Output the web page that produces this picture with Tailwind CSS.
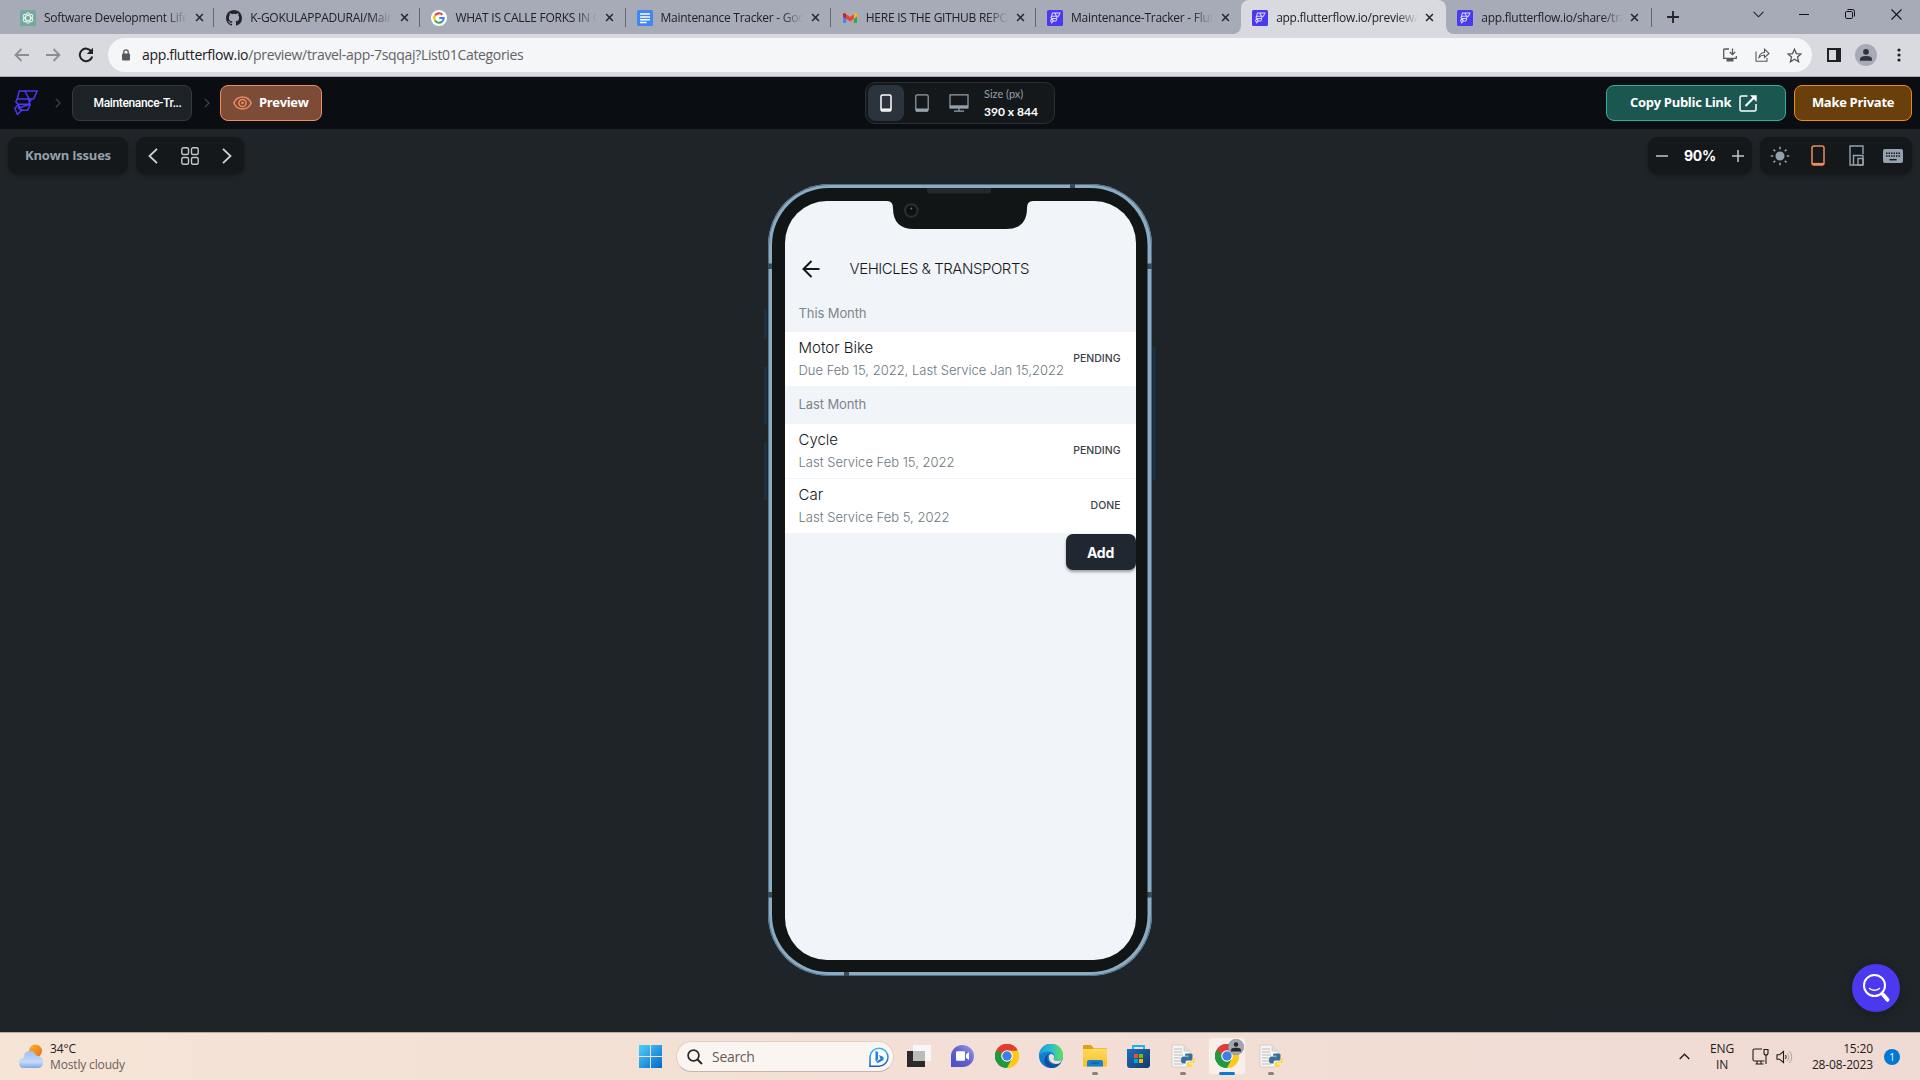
<!DOCTYPE html>
<html lang="en">
<head>
<meta charset="utf-8">
<title>app.flutterflow.io/preview</title>
<script src="https://cdn.jsdelivr.net/npm/@tailwindcss/browser@4"></script>
</head>
<body class="w-[1920px] h-[1080px] overflow-hidden flex flex-col bg-[#1f2428] font-['Open_Sans',sans-serif] text-[#202124]">

<svg class="absolute w-0 h-0" aria-hidden="true">
  <defs>
    <linearGradient id="edgeA" x1="0" y1="0" x2="1" y2="0"><stop offset="0" stop-color="#1b9de2"/><stop offset=".55" stop-color="#2cc0c9"/><stop offset="1" stop-color="#66e04c"/></linearGradient>
    <linearGradient id="edgeB" x1="0" y1="0" x2="0" y2="1"><stop offset="0" stop-color="#1b86d6"/><stop offset="1" stop-color="#1173c8"/></linearGradient>
    <linearGradient id="win" x1="0" y1="0" x2="1" y2="1"><stop offset="0" stop-color="#4fd0fb"/><stop offset="1" stop-color="#0369cd"/></linearGradient>
    <linearGradient id="bing" x1="0" y1="0" x2="0" y2="1"><stop offset="0" stop-color="#22c3e8"/><stop offset="1" stop-color="#1b55d6"/></linearGradient>
    <linearGradient id="chat" x1="0" y1="1" x2="1" y2="0"><stop offset="0" stop-color="#4a4fc4"/><stop offset=".5" stop-color="#6260cc"/><stop offset="1" stop-color="#9aa4ee"/></linearGradient>
    <linearGradient id="folder" x1="0" y1="0" x2="0" y2="1"><stop offset="0" stop-color="#ffd95e"/><stop offset="1" stop-color="#fbbf22"/></linearGradient>
    <linearGradient id="store" x1="0" y1="0" x2="1" y2="1"><stop offset="0" stop-color="#1c6fc0"/><stop offset="1" stop-color="#163a66"/></linearGradient>
    <linearGradient id="cloud" x1="0" y1="0" x2="0" y2="1"><stop offset="0" stop-color="#9cc0f6"/><stop offset=".65" stop-color="#c6dbf9"/><stop offset="1" stop-color="#7fa4e6"/></linearGradient>
    <linearGradient id="sun" x1="0" y1="0" x2="1" y2="1"><stop offset="0" stop-color="#f8b62a"/><stop offset="1" stop-color="#f06a10"/></linearGradient>
    <symbol id="close" viewBox="0 0 10 10"><path d="M1.2 1.2l7.6 7.6M8.8 1.2L1.2 8.8" stroke="#24262b" stroke-width="1.7" fill="none"/></symbol>
    <symbol id="ff" viewBox="0 0 24 26"><path d="M5.200 1H23.200L19.600 8.900H3.200ZM10.800 1L15.200 8.900M3.200 8.900L1.800 12L4.300 14.200H14.600L17.300 8.900M4.300 14.200L6 19.500L8 20.300H13.400L16 15.200L14.600 8.900M16 14.200H4.300L0.900 18.500L3.400 24.500L8 20L4.300 18Z" fill="none" stroke="currentColor" stroke-width="1.500" stroke-linejoin="round"/></symbol>
    <symbol id="fftab" viewBox="0 0 16 16"><rect width="16" height="16" rx="1.500" fill="#4b39ef"/><g transform="translate(3.200 2.500) scale(.42)" color="#d9d4ff"><path d="M5.200 1H23.200L19.600 8.900H3.200ZM10.800 1L15.200 8.900M3.200 8.900L1.800 12L4.300 14.200H14.600L17.300 8.900M4.300 14.200L6 19.500L8 20.300H13.400L16 15.200M4.300 14.200L0.900 18.500L3.400 24.500L8 20Z" fill="none" stroke="#dcd8ff" stroke-width="2.400"/></g></symbol>
    <symbol id="chrome" viewBox="0 0 24 24"><path d="M12 12L1.600 6A12 12 0 0 1 22.400 6Z" fill="#e33b2e"/><path d="M12 12L22.400 6A12 12 0 0 1 12 24Z" fill="#fdc81a"/><path d="M12 12L12 24A12 12 0 0 1 1.600 6Z" fill="#23993f"/><path d="M12 6.500H22.700A12 12 0 0 1 12 24L17 14.700Z" fill="#fdc81a"/><path d="M1.600 6L6.900 15L12 17.500L16.600 15.200L12 24A12 12 0 0 1 1.600 6Z" fill="#23993f"/><path d="M1.600 6A12 12 0 0 1 22.700 6.500H12L7 14.800Z" fill="#e33b2e"/><path d="M1.600 6L7.200 15.200L12 12L6.600 9.500Z" fill="#23993f"/><circle cx="12" cy="12" r="5.800" fill="#fff"/><circle cx="12" cy="12" r="4.700" fill="#3f7de8"/></symbol>
    <symbol id="pyfile" viewBox="0 0 24 24"><path d="M1 1H13L19 7V23H1Z" fill="#f6f5f4" stroke="#c9c5c3" stroke-width=".7"/><path d="M13 1V7H19" fill="#dedbd9" stroke="#c9c5c3" stroke-width=".7"/><path d="M3 5H11M3 8H11M3 11H12M3 14H10M3 17H10M3 20H12" stroke="#bdbab8" stroke-width="1.100"/><path d="M16 9.500h4q1.500 0 1.500 1.500v4q0 1.500-1.500 1.500h-4q-1.500 0-1.500 2v1h-2q-2.500 0-2.500-3.500t2.500-3.500h5v-.8h-3.500v-1q0-1.200 2-1.200z" fill="#36709f"/><path d="M22 13h1q1.500.5 1.500 3.200t-2 3.200h-4.500v.8h3.500v1.500q0 1.700-3 1.700t-3.200-1.700v-2.500q0-1.700 1.700-1.700h3.500q1.500 0 1.500-1.700z" fill="#ffd444" stroke="#fff" stroke-width=".4"/></symbol>
  </defs>
</svg>

<!-- Tab strip -->
<div class="h-[34px] shrink-0 bg-[#a7abb8] flex pl-[10px] text-[12px] leading-[16px] tracking-[-0.26px] whitespace-nowrap">
  <div class="w-[205.2px] flex items-center pl-[10px] pt-px border-r border-transparent relative">
    <svg class="size-4 shrink-0" viewBox="0 0 16 16"><rect width="16" height="16" rx="1.500" fill="#74aa9c"/><g fill="none" stroke="#e8f3f0" stroke-width="1"><ellipse cx="8" cy="8" rx="2.500" ry="5.300"/><ellipse cx="8" cy="8" rx="2.500" ry="5.300" transform="rotate(60 8 8)"/><ellipse cx="8" cy="8" rx="2.500" ry="5.300" transform="rotate(120 8 8)"/></g></svg>
    <span class="ml-2 w-[143px] overflow-hidden mask-r-from-85%">Software Development Life Cycle</span>
    <svg class="ml-[8px] size-[9px]"><use href="#close"/></svg>
    <i class="absolute right-0 top-[8px] w-px h-[19px] bg-[#64676f]"></i>
  </div>
  <div class="w-[205.2px] flex items-center pl-[11px] pt-px relative">
    <svg class="size-4 shrink-0" viewBox="0 0 16 16"><path fill="#24262b" d="M8 0C3.580 0 0 3.580 0 8c0 3.540 2.290 6.530 5.470 7.590.4.070.55-.17.55-.38 0-.19-.01-.82-.01-1.490-2.010.37-2.530-.49-2.690-.94-.09-.23-.48-.94-.82-1.130-.28-.15-.68-.52-.01-.53.63-.01 1.080.58 1.230.82.72 1.210 1.870.87 2.330.66.070-.52.280-.87.510-1.070-1.780-.2-3.640-.89-3.640-3.950 0-.87.310-1.590.82-2.150-.08-.2-.36-1.020.08-2.120 0 0 .67-.21 2.200.82a7.600 7.600 0 0 1 4 0c1.530-1.040 2.200-.82 2.200-.82.44 1.100.16 1.920.08 2.120.51.56.82 1.270.82 2.150 0 3.070-1.870 3.750-3.650 3.950.29.25.54.73.54 1.480 0 1.070-.01 1.930-.01 2.200 0 .21.15.46.55.38A8 8 0 0 0 16 8c0-4.420-3.580-8-8-8z"/></svg>
    <span class="ml-2 w-[142px] overflow-hidden mask-r-from-85%">K-GOKULAPPADURAI/Maintenance</span>
    <svg class="ml-[8px] size-[9px]"><use href="#close"/></svg>
    <i class="absolute right-0 top-[8px] w-px h-[19px] bg-[#64676f]"></i>
  </div>
  <div class="w-[205.2px] flex items-center pl-[11px] pt-px relative">
    <svg class="size-4 shrink-0" viewBox="0 0 16 16"><circle cx="8" cy="8" r="8" fill="#fff"/><g fill="none" stroke-width="2.100"><path d="M11.400 4.800A4.700 4.700 0 0 0 4 5.500" stroke="#ea4335"/><path d="M4 5.500A4.700 4.700 0 0 0 4 10.500" stroke="#fbbc05"/><path d="M4 10.500A4.700 4.700 0 0 0 11.300 11.400" stroke="#34a853"/><path d="M11.300 11.400A4.700 4.700 0 0 0 12.700 8H8.200" stroke="#4285f4"/></g></svg>
    <span class="ml-2 w-[142px] overflow-hidden mask-r-from-85%">WHAT IS CALLE FORKS IN GITHUB</span>
    <svg class="ml-[8px] size-[9px]"><use href="#close"/></svg>
    <i class="absolute right-0 top-[8px] w-px h-[19px] bg-[#64676f]"></i>
  </div>
  <div class="w-[205.2px] flex items-center pl-[11px] pt-px relative">
    <svg class="size-4 shrink-0" viewBox="0 0 16 16"><rect width="16" height="16" rx="1.500" fill="#4285f4"/><path d="M3 4H13M3 7H13M3 9.800H13M3 12.600H9.500" stroke="#fff" stroke-width="1.500"/></svg>
    <span class="ml-2 w-[142px] overflow-hidden mask-r-from-85%">Maintenance Tracker - Google Docs</span>
    <svg class="ml-[8px] size-[9px]"><use href="#close"/></svg>
    <i class="absolute right-0 top-[8px] w-px h-[19px] bg-[#64676f]"></i>
  </div>
  <div class="w-[205.2px] flex items-center pl-[11px] pt-px relative">
    <svg class="size-4 shrink-0" viewBox="0 0 16 16"><path d="M1 3.500V13H4.200V6.500Z" fill="#4285f4"/><path d="M15 3.500V13H11.800V6.500Z" fill="#34a853"/><path d="M11.800 4.200L13.400 3Q15 2.500 15 4.500V6.400L11.800 8.800Z" fill="#fbbc04"/><path d="M4.200 4.200L2.600 3Q1 2.500 1 4.500V6.400L4.200 8.800Z" fill="#c5221f"/><path d="M4.200 4.200L8 7.100L11.800 4.200V8.800L8 11.600L4.200 8.800Z" fill="#ea4335"/></svg>
    <span class="ml-2 w-[142px] overflow-hidden mask-r-from-85%">HERE IS THE GITHUB REPOSITORY</span>
    <svg class="ml-[8px] size-[9px]"><use href="#close"/></svg>
    <i class="absolute right-0 top-[8px] w-px h-[19px] bg-[#64676f]"></i>
  </div>
  <div class="w-[205.2px] flex items-center pl-[11px] pt-px">
    <svg class="size-4 shrink-0"><use href="#fftab"/></svg>
    <span class="ml-2 w-[142px] overflow-hidden mask-r-from-85%">Maintenance-Tracker - FlutterFlow</span>
    <svg class="ml-[8px] size-[9px]"><use href="#close"/></svg>
  </div>
  <div class="w-[205.2px] flex items-center pl-[11px] pt-px relative bg-[#d9dae0] rounded-t-[8px]">
    <svg class="absolute -left-2 bottom-0 size-2" viewBox="0 0 8 8"><path d="M8 0V8H0A8 8 0 0 0 8 0Z" fill="#d9dae0"/></svg>
    <svg class="absolute -right-2 bottom-0 size-2" viewBox="0 0 8 8"><path d="M0 0V8H8A8 8 0 0 1 0 0Z" fill="#d9dae0"/></svg>
    <svg class="size-4 shrink-0"><use href="#fftab"/></svg>
    <span class="ml-2 w-[142px] overflow-hidden mask-r-from-85%">app.flutterflow.io/preview/travel</span>
    <svg class="ml-[7px] size-[9px]"><use href="#close"/></svg>
  </div>
  <div class="w-[205.2px] flex items-center pl-[11px] pt-px relative">
    <svg class="size-4 shrink-0"><use href="#fftab"/></svg>
    <span class="ml-2 w-[142px] overflow-hidden mask-r-from-85%">app.flutterflow.io/share/travel-app</span>
    <svg class="ml-[7px] size-[9px]"><use href="#close"/></svg>
    <i class="absolute right-0 top-[8px] w-px h-[19px] bg-[#64676f]"></i>
  </div>
  <svg class="ml-[15px] mt-[11px] size-3" viewBox="0 0 12 12"><path d="M6 0V12M0 6H12" stroke="#24262b" stroke-width="1.900"/></svg>
  <svg class="ml-auto mt-[11px] w-[11px] h-[7px]" viewBox="0 0 11 7"><path d="M.6.800L5.500 5.800L10.400.800" fill="none" stroke="#202124" stroke-width="1.100"/></svg>
  <svg class="ml-[35px] mt-[14px] w-[10px] h-px" viewBox="0 0 10 1"><path d="M0 .5H10" stroke="#111" stroke-width="1"/></svg>
  <svg class="ml-[36px] mt-[9px] size-[10px]" viewBox="0 0 10 10"><rect x=".5" y="2.500" width="7" height="7" rx="1.200" fill="none" stroke="#111"/><path d="M2.500.5H7.500Q9.500.5 9.500 2.500V7.500" fill="none" stroke="#111"/></svg>
  <svg class="ml-[36px] mr-[18px] mt-[9px] size-[11px]" viewBox="0 0 11 11"><path d="M.5.500L10.500 10.500M10.500.500L.5 10.500" stroke="#111" stroke-width="1.100"/></svg>
</div>

<!-- Toolbar -->
<div class="h-[43px] shrink-0 bg-[#d9dae0] border-b border-[#a9b0b5] flex items-center pb-0">
  <svg class="ml-[14px] w-[15px] h-[14px]" viewBox="0 0 15 14"><path d="M7.500 1L1.500 7L7.500 13M1.500 7H15" fill="none" stroke="#8b8d94" stroke-width="1.800"/></svg>
  <svg class="ml-[17px] w-[15px] h-[14px]" viewBox="0 0 15 14"><path d="M7.500 1L13.500 7L7.500 13M13.500 7H0" fill="none" stroke="#8b8d94" stroke-width="1.800"/></svg>
  <svg class="ml-[17px] size-[16px]" viewBox="0 0 16 16"><path d="M13.400 4.500A6.300 6.300 0 1 0 14.200 9.500" fill="none" stroke="#202124" stroke-width="2"/><path d="M15 .8V7H8.800Z" fill="#202124"/></svg>
  <div class="ml-[14px] w-[1704px] h-[34px] rounded-full bg-[#f5f6f8] flex items-center">
    <svg class="ml-[14px] w-[8px] h-[12px]" viewBox="0 0 8 12"><path d="M1.800 5V3A2.200 2.200 0 0 1 6.200 3V5" fill="none" stroke="#55585d" stroke-width="1.300"/><rect y="4.600" width="8" height="7" rx="1" fill="#55585d"/></svg>
    <span class="ml-[12px] text-[14px] leading-5 tracking-[-0.33px] text-[#5f6368] whitespace-nowrap"><span class="text-[#202124]">app.flutterflow.io</span>/preview/travel-app-7sqqaj?List01Categories</span>
    <svg class="ml-auto size-[14px]" viewBox="0 0 14 14"><path d="M6 1H1.500Q.7 1 .7 1.800V10.300H13.300V8M9.500.5V6.500M6.800 4L9.500 6.700L12.200 4" fill="none" stroke="#55585d" stroke-width="1.300"/><path d="M3.500 11H10.500V13.500H3.500Z" fill="#55585d"/></svg>
    <svg class="ml-[18px] w-[15px] h-[14px]" viewBox="0 0 15 14"><path d="M1 3.500V13.200H12V10M4 9.500Q4.500 5 9.500 4.500V1.200L14 5.500L9.500 9.500V7Q6 7 4 9.500Z" fill="none" stroke="#55585d" stroke-width="1.100"/></svg>
    <svg class="ml-[17px] mr-[10px] size-[15px]" viewBox="0 0 15 15"><path d="M7.500 1.200L9.400 5.600L14 6L10.500 9.100L11.600 13.800L7.500 11.300L3.400 13.800L4.500 9.100L1 6L5.600 5.600Z" fill="none" stroke="#55585d" stroke-width="1.300"/></svg>
  </div>
  <svg class="ml-[15px] w-[14px] h-[14px]" viewBox="0 0 14 14"><path d="M0 0H14V14H0ZM2 2V12H9V2Z" fill="#202124" fill-rule="evenodd"/></svg>
  <svg class="ml-[14px] size-[22px]" viewBox="0 0 22 22"><circle cx="11" cy="11" r="11" fill="#a7abb8"/><circle cx="11" cy="7.800" r="2.900" fill="#303338"/><path d="M5 16.800V15.200Q5 12 11 12T17 15.200V16.800Z" fill="#303338"/></svg>
  <svg class="ml-[20px] w-[4px] h-[14px]" viewBox="0 0 4 14"><g fill="#202124"><circle cx="2" cy="2" r="1.600"/><circle cx="2" cy="7" r="1.600"/><circle cx="2" cy="12" r="1.600"/></g></svg>
</div>

<!-- App header -->
<header class="h-[52px] shrink-0 bg-[#0a0e12] flex items-center px-2 relative">
  <svg class="ml-[5px] w-[26px] h-[26px] text-[#4b39ef]" viewBox="0 0 24 26"><use href="#ff"/></svg>
  <svg class="ml-[16px] w-[6px] h-[10px]" viewBox="0 0 6 10"><path d="M.8.800L5 5L.8 9.200" fill="none" stroke="#3b4248" stroke-width="1.300"/></svg>
  <div class="ml-[11px] w-[120px] h-[36px] rounded-[8px] border border-[#323b42] bg-[#1c2225] flex items-center pl-[10.500px] text-white text-[12px] font-medium tracking-[-0.35px] font-[Roboto,sans-serif]"><span class="pl-[10px]">Maintenance-Tr...</span></div>
  <svg class="ml-[12px] w-[6px] h-[10px]" viewBox="0 0 6 10"><path d="M.8.800L5 5L.8 9.200" fill="none" stroke="#3b4248" stroke-width="1.300"/></svg>
  <div class="ml-[10px] w-[102px] h-[36px] rounded-[8px] border-[1.500px] border-[#ee8b60] bg-[#7c4c37] flex items-center pl-[12px]">
    <svg class="w-[19px] h-[14px]" viewBox="0 0 19 14"><path d="M.8 7Q3.500 1 9.500 1T18.200 7Q15.500 13 9.500 13T.8 7Z" fill="none" stroke="#ee8b60" stroke-width="1.500"/><circle cx="9.500" cy="7" r="3.600" fill="none" stroke="#ee8b60" stroke-width="1.500"/><circle cx="9.500" cy="7" r="1.300" fill="#ee8b60"/></svg>
    <span class="ml-[7px] text-white text-[13px] font-bold tracking-[-0.35px]">Preview</span>
  </div>
  <div class="absolute left-[865px] top-[5px] w-[190px] h-[42px] rounded-[10px] border border-[#2a2f34] bg-[#14181b] flex items-center pl-[2px]">
    <div class="w-[36px] h-[36px] rounded-[8px] bg-[#2b343d] flex items-center justify-center"><svg class="w-[12px] h-[18px]" viewBox="0 0 12 18"><rect x="1" y="1" width="10" height="16" rx="1.500" fill="none" stroke="#fff" stroke-width="1.500"/><path d="M1 15.500H11" stroke="#fff" stroke-width="2"/></svg></div>
    <svg class="ml-[11px] w-[14px] h-[18px]" viewBox="0 0 14 18"><rect x=".8" y=".8" width="12.400" height="16.400" rx="1.500" fill="none" stroke="#95a1ac" stroke-width="1.200"/><path d="M1 16H13" stroke="#95a1ac" stroke-width="3"/></svg>
    <svg class="ml-[20px] w-[20px] h-[18px]" viewBox="0 0 20 18"><path d="M1 .8H19V14H1Z" fill="none" stroke="#95a1ac" stroke-width="1.200"/><path d="M1 12.800H19" stroke="#95a1ac" stroke-width="3"/><path d="M10 14V17M5 17.200H15" stroke="#95a1ac" stroke-width="1.200"/></svg>
    <div class="ml-[15px] flex flex-col font-[Lato,sans-serif] whitespace-nowrap"><span class="text-[11px] leading-[18px] text-[#95a1ac]">Size (px)</span><span class="text-[12px] leading-[18px] font-bold text-white">390 x 844</span></div>
  </div>
  <div class="ml-auto w-[180px] h-[36px] rounded-[8px] border-[1.500px] border-[#31b09c] bg-[#1b5650] flex items-center pl-[23px] text-white text-[13px] font-bold tracking-[-0.3px] whitespace-nowrap"><span>Copy Public Link</span>
    <svg class="ml-[8px] w-[18px] h-[17px]" viewBox="0 0 18 17"><path d="M8.500 1H2.500Q1 1 1 2.500V14.500Q1 16 2.500 16H15.500Q17 16 17 14.500V9" fill="none" stroke="#fff" stroke-width="1.500"/><path d="M6.500 11L14.500 3" stroke="#fff" stroke-width="2.200"/><path d="M11 .3H17.700V7Z" fill="#fff"/></svg>
  </div>
  <div class="ml-[8px] w-[118px] h-[36px] rounded-[8px] border-[1.500px] border-[#f08a0c] bg-[#69400c] flex items-center justify-center text-white text-[13px] font-bold tracking-[-0.3px] whitespace-nowrap">Make Private</div>
</header>

<!-- Canvas -->
<main class="flex-1 relative bg-[#1f2428]">
  <div class="flex px-2 pt-[8px]">
    <div class="w-[120px] h-[37px] rounded-[9px] bg-[#14181b] shadow-[0_2px_4px_rgba(0,0,0,0.25)] flex items-center justify-center text-[13px] font-bold tracking-[-0.2px] text-[#95a1ac] whitespace-nowrap">Known Issues</div>
    <div class="ml-[8px] w-[108px] h-[37px] rounded-[9px] bg-[#14181b] shadow-[0_2px_4px_rgba(0,0,0,0.25)] flex items-center">
      <svg class="ml-[12px] w-[10px] h-[16px]" viewBox="0 0 10 16"><path d="M9 .8L1.500 8L9 15.200" fill="none" stroke="#d0d2d4" stroke-width="1.800"/></svg>
      <svg class="ml-[23px] size-[18px]" viewBox="0 0 18 18"><g fill="none" stroke="#c3c6c9" stroke-width="1.400"><rect x=".8" y=".8" width="6.700" height="6.700" rx="1.500"/><rect x="10.500" y=".8" width="6.700" height="6.700" rx="1.500"/><rect x=".8" y="10.500" width="6.700" height="6.700" rx="1.500"/><rect x="10.500" y="10.500" width="6.700" height="6.700" rx="1.500"/></g></svg>
      <svg class="ml-[23px] w-[10px] h-[16px]" viewBox="0 0 10 16"><path d="M1 .8L8.500 8L1 15.200" fill="none" stroke="#d0d2d4" stroke-width="1.800"/></svg>
    </div>
    <div class="ml-auto w-[104px] h-[37px] rounded-[9px] bg-[#14181b] shadow-[0_2px_4px_rgba(0,0,0,0.25)] flex items-center">
      <svg class="ml-[8px] w-[12px] h-[12px]" viewBox="0 0 12 12"><path d="M0 6H12" stroke="#c3c6c9" stroke-width="1.500"/></svg>
      <span class="w-[64px] text-center text-[14px] leading-[18px] font-[Inter,sans-serif] font-bold tracking-[-0.3px] text-white">90%</span>
      <svg class="w-[12px] h-[12px]" viewBox="0 0 12 12"><path d="M0 6H12M6 0V12" stroke="#c3c6c9" stroke-width="1.500"/></svg>
    </div>
    <div class="ml-[8px] w-[152px] h-[37px] rounded-[9px] bg-[#14181b] shadow-[0_2px_4px_rgba(0,0,0,0.25)] flex items-center">
      <svg class="ml-[10px] size-[20px]" viewBox="0 0 20 20"><circle cx="10" cy="10" r="4.500" fill="#95a1ac"/><path d="M10 .8V3.200M10 16.800V19.200M.8 10H3.200M16.800 10H19.200M3.500 3.500L5.200 5.200M14.800 14.800L16.500 16.500M16.500 3.500L14.800 5.200M5.200 14.800L3.500 16.500" stroke="#95a1ac" stroke-width="1.600"/></svg>
      <svg class="ml-[21px] w-[14px] h-[21px]" viewBox="0 0 14 21"><rect x="1" y="1" width="12" height="19" rx="2" fill="none" stroke="#ee8b60" stroke-width="1.500"/><path d="M1.500 19H12.500" stroke="#ee8b60" stroke-width="2.200"/></svg>
      <svg class="ml-[24px] w-[15px] h-[21px]" viewBox="0 0 15 21"><path d="M14 9V1H1V20H14M4.500 20V10.500H14V20" fill="none" stroke="#95a1ac" stroke-width="1.400"/><rect x="9" y="13.500" width="5" height="6.500" fill="none" stroke="#95a1ac" stroke-width="1.400"/></svg>
      <svg class="ml-[19px] w-[20px] h-[14px]" viewBox="0 0 20 14"><rect width="20" height="14" rx="2" fill="#95a1ac"/><path d="M3 4.200H17M3 7H17" stroke="#14181b" stroke-width="1.500" stroke-dasharray="1.500 1"/><path d="M6.500 10.700H13.500" stroke="#14181b" stroke-width="1.400"/></svg>
    </div>
  </div>

  <!-- Device frame -->
  <div class="absolute left-[764px] top-[54px] w-[392px] h-[795px]">
    <svg class="absolute inset-0" width="392" height="795" viewBox="0 0 392 795">
      <path d="M1.500 126V156M1.500 184V241M1.500 260V317M390 164V297" stroke="#1c313f" stroke-width="3"/>
      <rect x="4" y="1" width="384" height="792" rx="61" fill="#8babc3"/>
      <rect x="4.500" y="1.500" width="383" height="791" rx="60.500" fill="none" stroke="#527087" stroke-width="1"/>
      <path d="M306 1H311V6H306ZM80 788H85V793H80ZM4 80.500H9V86H4ZM383 80.500H388V86H383ZM4 709H9V714.500H4ZM383 709H388V714.500H383Z" fill="#3a4a55"/>
      <rect x="8" y="5" width="375.500" height="784" rx="57" fill="#111516"/>
    </svg>
    <div class="absolute left-[20.5px] top-[18px] w-[351px] h-[759px] rounded-[42px] bg-[#f1f4f8] overflow-hidden font-[Inter,sans-serif]">
      <div class="h-[130.500px] pt-[50px] flex flex-col">
        <div class="h-[36px] flex items-center pl-[17px]">
          <svg class="w-[18px] h-[18px]" viewBox="0 0 18 18"><path d="M9.500 1L1.500 9L9.500 17M1.500 9H17.500" fill="none" stroke="#14181b" stroke-width="2"/></svg>
          <span class="ml-[30px] text-[15px] font-light tracking-[-0.45px] text-[#14181b] whitespace-nowrap">VEHICLES &amp; TRANSPORTS</span>
        </div>
        <div class="h-[44px] pt-[16px] pl-[14px] text-[13px] leading-[20px] tracking-[-0.1px] text-[#7c868f]">This Month</div>
      </div>
      <div class="h-[54px] bg-white flex items-center justify-between pl-[14px] pr-[15px]">
        <div class="flex flex-col whitespace-nowrap"><span class="text-[15px] leading-[22px] font-light text-[#14181b]">Motor Bike</span><span class="text-[13px] leading-[22px] text-[#6b7680] font-light">Due Feb 15, 2022, Last Service Jan 15,2022</span></div>
        <span class="text-[10.500px] font-medium text-[#3c4147]">PENDING</span>
      </div>
      <div class="h-[38.500px] pl-[14px] flex items-center text-[13px] tracking-[-0.1px] text-[#7c868f]">Last Month</div>
      <div class="h-[54px] bg-white flex items-center justify-between pl-[14px] pr-[15px]">
        <div class="flex flex-col whitespace-nowrap"><span class="text-[15px] leading-[22px] font-light text-[#14181b]">Cycle</span><span class="text-[13px] leading-[22px] text-[#6b7680] font-light">Last Service Feb 15, 2022</span></div>
        <span class="text-[10.500px] font-medium text-[#3c4147]">PENDING</span>
      </div>
      <div class="h-[54px] mt-px bg-white flex items-center justify-between pl-[14px] pr-[15px]">
        <div class="flex flex-col whitespace-nowrap"><span class="text-[15px] leading-[22px] font-light text-[#14181b]">Car</span><span class="text-[13px] leading-[22px] text-[#6b7680] font-light">Last Service Feb 5, 2022</span></div>
        <span class="text-[10.500px] font-medium text-[#3c4147]">DONE</span>
      </div>
      <div class="mt-px ml-auto w-[70px] h-[36px] rounded-[7px] bg-[#202730] shadow-[0_2px_3px_rgba(0,0,0,0.35)] flex items-center justify-center text-white text-[14px] font-bold tracking-[-0.2px]">Add</div>
    </div>
    <svg class="absolute left-0 top-0" width="392" height="60" viewBox="0 0 392 60">
      <path d="M123 18Q129 18 129 25Q129 46 150 46H242Q263 46 263 25Q263 18 269 18V15H123Z" fill="#111516"/>
      <path d="M163 5H227V8Q227 10.500 224 10.500H166Q163 10.500 163 8Z" fill="#25292b"/>
      <circle cx="147.300" cy="27.500" r="6.300" fill="#0d1011" stroke="#2a2f31" stroke-width="2"/><circle cx="147.300" cy="25.500" r="1" fill="#666b6e"/>
    </svg>
  </div>

  <div class="absolute right-[20px] bottom-[20px] size-[48px] rounded-full bg-[#4b39ef] shadow-[0_2px_12px_rgba(0,0,0,0.25)] flex items-center justify-center">
    <svg class="size-[30px]" viewBox="0 0 30 30"><circle cx="13.500" cy="12.500" r="10.500" fill="none" stroke="#fff" stroke-width="2"/><path d="M8.500 15.500Q13.500 19 18.500 15.500" fill="none" stroke="#fff" stroke-width="1.500" stroke-linecap="round"/><path d="M20 19.500L22 21.500" stroke="#fff" stroke-width="2.500"/><path d="M22.200 21.800L26.500 26.800" stroke="#fff" stroke-width="4" stroke-linecap="round"/></svg>
  </div>
</main>

<!-- Taskbar -->
<footer class="h-[48px] shrink-0 border-t border-[#b9aea5] bg-linear-to-r from-[#f6e4d7] via-[#f3dfd5] to-[#efdbd4] flex items-center relative text-[12px] whitespace-nowrap">
  <svg class="ml-[19px] w-[24px] h-[25px]" viewBox="0 0 24 25"><circle cx="16.500" cy="7" r="6.500" fill="url(#sun)"/><path d="M5 24Q0 24 0 19Q0 14.500 4.500 14Q5 7 11 7Q15.500 7 17 11.500Q24 12 24 18Q24 24 18.500 24Z" fill="url(#cloud)"/></svg>
  <div class="ml-[7px] flex flex-col leading-[16px] tracking-[-0.15px]"><span class="text-[#1f1b19]">34°C</span><span class="text-[#6a605b]">Mostly cloudy</span></div>

  <svg class="absolute left-[639px] top-[12px] size-[23px]" viewBox="0 0 23 23"><path d="M0 0H11V11H0ZM12 0H23V11H12ZM0 12H11V23H0ZM12 12H23V23H12Z" fill="url(#win)"/></svg>
  <div class="absolute left-[676px] top-[8px] w-[218px] h-[31px] rounded-full bg-[#fbf5f1] border border-[#e2cfc5] border-b-[#c9b5aa] flex items-center pl-[10px]">
    <svg class="size-[16px]" viewBox="0 0 16 16"><circle cx="6.500" cy="6.500" r="5.400" fill="none" stroke="#2b2826" stroke-width="1.700"/><path d="M10.500 10.500L15 15" stroke="#2b2826" stroke-width="1.900"/></svg>
    <span class="ml-[9px] text-[14px] tracking-[-0.3px] text-[#625c58]">Search</span>
    <svg class="ml-auto mr-[4px] size-[20px]" viewBox="0 0 20 20"><path d="M1 19.200V10A9 9 0 1 1 10 19.200Z" fill="#fff" stroke="url(#bing)" stroke-width="1.500"/><path d="M6.500 4L9 5V12.500L7 14.500L6.500 13.500ZM10 8L14.500 10V13L9 16L7 14.800L11.500 12Z" fill="#1f7fe6"/></svg>
  </div>
  <svg class="absolute left-[907px] top-[12px] w-[24px] h-[22px]" viewBox="0 0 24 22"><rect y="6" width="18" height="16" fill="#2a2a2a"/><rect x="6" width="18" height="16" fill="#f7f7f7"/><rect x="6" y="6" width="12" height="10" fill="#bcbcbc"/></svg>
  <svg class="absolute left-[951px] top-[12px] size-[23px]" viewBox="0 0 23 23"><path d="M0 22V11.500A11.500 11 0 1 1 11.500 22Z" fill="url(#chat)"/><rect x="5" y="6.300" width="9" height="9.500" rx="1" fill="#fff"/><path d="M15 9.500L18 7V15L15 12.800Z" fill="#fff"/></svg>
  <svg class="absolute left-[995px] top-[11px] size-[24px]"><use href="#chrome"/></svg>
  <svg class="absolute left-[1039px] top-[11px] size-[24px]" viewBox="0 0 24 24"><circle cx="12" cy="12" r="12" fill="url(#edgeB)"/><path d="M0 11A12 12 0 0 1 24 12Q24 17 18.500 17Q14.500 17 14.500 14.500Q15.500 13.500 15.500 12Q15 8 10 7.500Q3 7.500 0 11Z" fill="url(#edgeA)"/><path d="M8.500 13Q8 19.500 15 20.500Q19 21 22 18.500Q18.500 24 12.500 24Q4 22 5.500 14.500Q7 10 11.500 9.500Q8.500 10.500 8.500 13Z" fill="#114f9e"/><path d="M14.500 14.500Q14.500 17 18.500 17Q21.500 17 23 15.500Q21.500 20 17 20Q10 19 9.800 13Q10 10 12.500 10Q15.500 11 15.300 13Z" fill="#f2dfd6"/></svg>
  <svg class="absolute left-[1083px] top-[12px] w-[24px] h-[22px]" viewBox="0 0 24 22"><path d="M0 1Q0 0 1 0H8L10.500 3H24V8H0Z" fill="#e0a010"/><rect y="4" width="24" height="17.500" rx=".8" fill="url(#folder)"/><path d="M10 3.500H24V6H8Z" fill="#ffd95e"/><path d="M4 21.500V17Q4 15 6 15H18Q20 15 20 17V21.500Z" fill="#1580d0"/><path d="M8 18H16" stroke="#0f5fa8" stroke-width="1.500"/></svg>
  <svg class="absolute left-[1127px] top-[12px] w-[23px] h-[23px]" viewBox="0 0 23 23"><path d="M6 5V1H17V5" fill="none" stroke="#1db0f0" stroke-width="1.800"/><path d="M0 4H23V20Q23 23 20 23H3Q0 23 0 20Z" fill="url(#store)"/><path d="M7 9H11V13H7Z" fill="#f25022"/><path d="M12 9H16V13H12Z" fill="#7fba00"/><path d="M7 14H11V18H7Z" fill="#00a4ef"/><path d="M12 14H16V18H12Z" fill="#ffb900"/></svg>
  <svg class="absolute left-[1171px] top-[11px] size-[24px] overflow-visible"><use href="#pyfile"/></svg>
  <div class="absolute left-[1208px] top-[4px] w-[38px] h-[38px] rounded-[4px] bg-[#f9efea] border border-[#f0e2da]"></div>
  <svg class="absolute left-[1215px] top-[11px] size-[24px]"><use href="#chrome"/></svg>
  <svg class="absolute left-[1228px] top-[6px] size-[16px]" viewBox="0 0 16 16"><circle cx="8" cy="8" r="7.800" fill="#a3a7b3" stroke="#7a7d86" stroke-width=".5"/><circle cx="8" cy="5.500" r="2.200" fill="#26282c"/><path d="M3 12.500V11Q3 8.700 8 8.700T13 11V12.500Z" fill="#26282c"/></svg>
  <svg class="absolute left-[1259px] top-[11px] size-[24px] overflow-visible"><use href="#pyfile"/></svg>
  <i class="absolute left-[1092px] top-[39px] w-[6px] h-[3px] rounded-full bg-[#8b807b]"></i>
  <i class="absolute left-[1180px] top-[39px] w-[6px] h-[3px] rounded-full bg-[#8b807b]"></i>
  <i class="absolute left-[1219px] top-[39px] w-[16px] h-[3px] rounded-full bg-[#0f78d4]"></i>
  <i class="absolute left-[1268px] top-[39px] w-[6px] h-[3px] rounded-full bg-[#8b807b]"></i>

  <div class="ml-auto flex items-center pr-[20px] text-[#1f1b19]">
    <svg class="w-[11px] h-[7px]" viewBox="0 0 11 7"><path d="M.7 6L5.500 1.200L10.300 6" fill="none" stroke="#1f1b19" stroke-width="1.300"/></svg>
    <div class="ml-[20px] w-[24px] flex flex-col items-center leading-[16px] tracking-[-0.2px]"><span>ENG</span><span>IN</span></div>
    <svg class="ml-[18px] w-[17px] h-[17px]" viewBox="0 0 17 17"><path d="M10 1H2.500Q1 1 1 2.500V11.500Q1 13 2.500 13H12.500M5 13V15.500M9 13V15.500M3.500 16H11.500M12 1.500H16V5Q16 7 14 7T12 5ZM14 7V16" fill="none" stroke="#1f1b19" stroke-width="1.100"/></svg>
    <svg class="ml-[7px] w-[17px] h-[14px]" viewBox="0 0 17 14"><path d="M1 4.800H3.500L7.500 1.500V12.500L3.500 9.200H1Z" fill="none" stroke="#1f1b19" stroke-width="1.100"/><path d="M9.500 5Q11 7 9.500 9" fill="none" stroke="#1f1b19"/><path d="M11.500 3Q14.500 7 11.500 11M13.500 1Q18 7 13.500 13" fill="none" stroke="#b5a59e"/></svg>
    <div class="ml-[15px] w-[65px] flex flex-col items-end leading-[16px] tracking-[-0.15px]"><span>15:20</span><span>28-08-2023</span></div>
    <div class="ml-[11px] size-[16px] rounded-full bg-[#0078d4] text-white text-[10px] leading-[16px] text-center">1</div>
  </div>
</footer>
</body>
</html>
